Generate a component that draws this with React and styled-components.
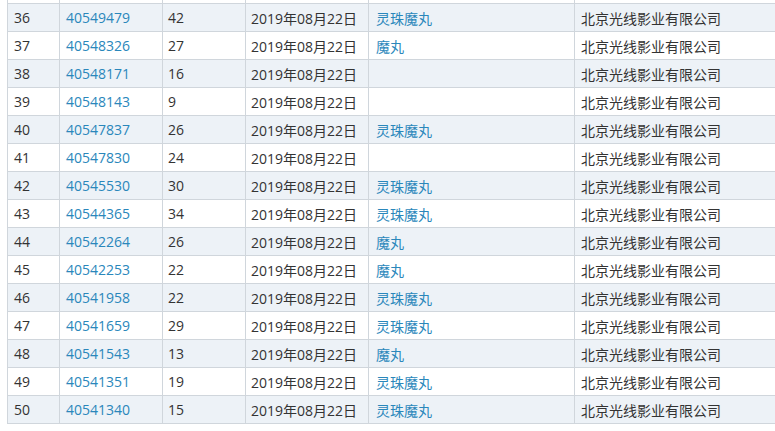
import React from "react";
import styled, { createGlobalStyle } from "styled-components";

const Global = createGlobalStyle`
  html, body { margin: 0; padding: 0; background: #ffffff; }
  body { overflow: hidden; }
`;

const Page = styled.div`
  width: 775px;
  height: 431px;
  overflow: hidden;
  padding-left: 7px;
  box-sizing: border-box;
  background: #fff;
`;

const Table = styled.table`
  border-collapse: collapse;
  table-layout: fixed;
  width: 768px;
  margin-top: -25px;
  font-size: 14px;
  color: #333;
`;

const Col = styled.col`
  width: ${(p) => p.$w}px;
`;

const Row = styled.tr`
  background: ${(p) => (p.$shaded ? "#edf2f7" : "#ffffff")};
`;

const Cell = styled.td`
  height: 27px;
  padding: 0 0 0 ${(p) => p.$pad || 6}px;
  border: 1px solid #d0d6dc;
  white-space: nowrap;
  overflow: hidden;
  vertical-align: middle;
  color: ${(p) => (p.$link ? "#2a87bb" : "#333")};
  font-family: ${(p) =>
    p.$cjk
      ? `"Noto Sans CJK SC", sans-serif`
      : `"Open Sans", "Noto Sans CJK SC", sans-serif`};
`;

const widths = [52, 103, 83, 123, 206, 201];

const rows = [
  [36, "40549479", "42", "2019年08月22日", "灵珠魔丸"],
  [37, "40548326", "27", "2019年08月22日", "魔丸"],
  [38, "40548171", "16", "2019年08月22日", ""],
  [39, "40548143", "9", "2019年08月22日", ""],
  [40, "40547837", "26", "2019年08月22日", "灵珠魔丸"],
  [41, "40547830", "24", "2019年08月22日", ""],
  [42, "40545530", "30", "2019年08月22日", "灵珠魔丸"],
  [43, "40544365", "34", "2019年08月22日", "灵珠魔丸"],
  [44, "40542264", "26", "2019年08月22日", "魔丸"],
  [45, "40542253", "22", "2019年08月22日", "魔丸"],
  [46, "40541958", "22", "2019年08月22日", "灵珠魔丸"],
  [47, "40541659", "29", "2019年08月22日", "灵珠魔丸"],
  [48, "40541543", "13", "2019年08月22日", "魔丸"],
  [49, "40541351", "19", "2019年08月22日", "灵珠魔丸"],
  [50, "40541340", "15", "2019年08月22日", "灵珠魔丸"],
];

export default function App() {
  return (
    <Page>
      <Global />
      <Table>
        <colgroup>
          {widths.map((w, i) => (
            <Col key={i} $w={w} />
          ))}
        </colgroup>
        <tbody>
          <Row>
            {widths.map((w, i) => (
              <Cell key={i} />
            ))}
          </Row>
          {rows.map(([n, id, cnt, date, name]) => (
            <Row key={n} $shaded={n % 2 === 0}>
              <Cell>{n}</Cell>
              <Cell $link>{id}</Cell>
              <Cell $pad={5}>{cnt}</Cell>
              <Cell $pad={5}>{date}</Cell>
              <Cell $link $cjk $pad={7}>{name}</Cell>
              <Cell $cjk>北京光线影业有限公司</Cell>
            </Row>
          ))}
        </tbody>
      </Table>
    </Page>
  );
}
